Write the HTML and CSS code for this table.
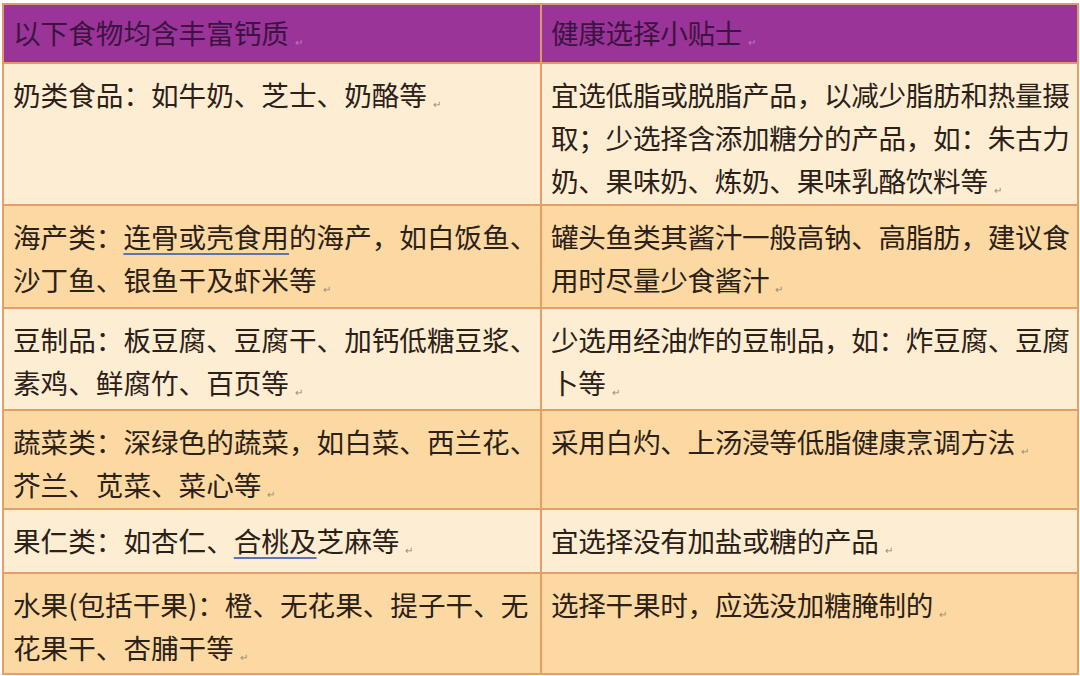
FILE: index.html
```html
<!DOCTYPE html>
<html lang="zh-CN">
<head>
<meta charset="utf-8">
<title>含丰富钙质的食物</title>
<link rel="stylesheet" href="styles.css">
</head>
<body>
<table class="calcium">
  <colgroup><col class="col-l"><col class="col-r"></colgroup>
  <tr class="head">
    <th class="cell-l">以下食物均含丰富钙质<span class="pm pm-h">↵</span></th>
    <th class="cell-r">健康选择小贴士<span class="pm pm-h">↵</span></th>
  </tr>
  <tr class="row light r1">
    <td class="cell-l">奶类食品：如牛奶、芝士、奶酪等<span class="pm">↵</span></td>
    <td class="cell-r">宜选低脂或脱脂产品，以减少脂肪和热量摄<br>取；少选择含添加糖分的产品，如：朱古力<br>奶、果味奶、炼奶、果味乳酪饮料等<span class="pm">↵</span></td>
  </tr>
  <tr class="row dark r2">
    <td class="cell-l">海产类：<span class="gram">连骨或壳食用</span>的海产，如白饭鱼、<br>沙丁鱼、银鱼干及虾米等<span class="pm">↵</span></td>
    <td class="cell-r">罐头鱼类其酱汁一般高钠、高脂肪，建议食<br>用时尽量少食酱汁<span class="pm">↵</span></td>
  </tr>
  <tr class="row light r3">
    <td class="cell-l">豆制品：板豆腐、豆腐干、加钙低糖豆浆、<br>素鸡、鲜腐竹、百页等<span class="pm">↵</span></td>
    <td class="cell-r">少选用经油炸的豆制品，如：炸豆腐、豆腐<br>卜等<span class="pm">↵</span></td>
  </tr>
  <tr class="row dark r4">
    <td class="cell-l">蔬菜类：深绿色的蔬菜，如白菜、西兰花、<br>芥兰、苋菜、菜心等<span class="pm">↵</span></td>
    <td class="cell-r">采用白灼、上汤浸等低脂健康烹调方法<span class="pm">↵</span></td>
  </tr>
  <tr class="row light r5">
    <td class="cell-l">果仁类：如杏仁、<span class="gram">合桃及</span>芝麻等<span class="pm">↵</span></td>
    <td class="cell-r">宜选择没有加盐或糖的产品<span class="pm">↵</span></td>
  </tr>
  <tr class="row dark r6">
    <td class="cell-l">水果(包括干果)：橙、无花果、提子干、无<br>花果干、杏脯干等<span class="pm">↵</span></td>
    <td class="cell-r">选择干果时，应选没加糖腌制的<span class="pm">↵</span></td>
  </tr>
</table>
</body>
</html>
```

FILE: styles.css
```css
html, body {
  margin: 0;
  padding: 0;
  background: #ffffff;
}

body {
  font-family: "Noto Sans CJK SC", "Noto Sans", sans-serif;
  color: #2b2118;
}

.calcium {
  margin: 3px 0 0 2px;
  width: 1075px;
  border-collapse: collapse;
  table-layout: fixed;
  border: 2px solid #e58e5a;
}

.col-l { width: 538px; }
.col-r { width: 537px; }

.calcium th,
.calcium td {
  border: 2px solid #e3a066;
  padding: 9px 0 0 9px;
  vertical-align: top;
  text-align: left;
  font-size: 27.6px;
  font-weight: 400;
  line-height: 43px;
  white-space: nowrap;
  overflow: hidden;
}

.calcium .cell-l { letter-spacing: 0; }
.calcium .cell-r { letter-spacing: -0.3px; }

.head th {
  background: #9b3499;
  color: #3c1341;
  height: 59px;
  padding-top: 6px;
  box-sizing: border-box;
  border-color: #e09a6a;
}

.light td { background: #fdedd3; }
.dark td { background: #fcd9a2; }

.row td { box-sizing: border-box; }
.r1 td { height: 142px; }
.r2 td { height: 103px; }
.r3 td { height: 102px; }
.r4 td { height: 99px; }
.r5 td { height: 64px; }
.r6 td { height: 101px; }

.pm {
  font-size: 10px;
  line-height: 1;
  color: #9a8a78;
  margin-left: 6px;
  letter-spacing: 0;
  vertical-align: -2px;
}

.pm-h {
  color: rgba(255, 255, 255, 0.35);
}

.gram {
  text-decoration: underline;
  text-decoration-color: #5f72b8;
  text-decoration-thickness: 2px;
  text-underline-offset: 5px;
}
```
